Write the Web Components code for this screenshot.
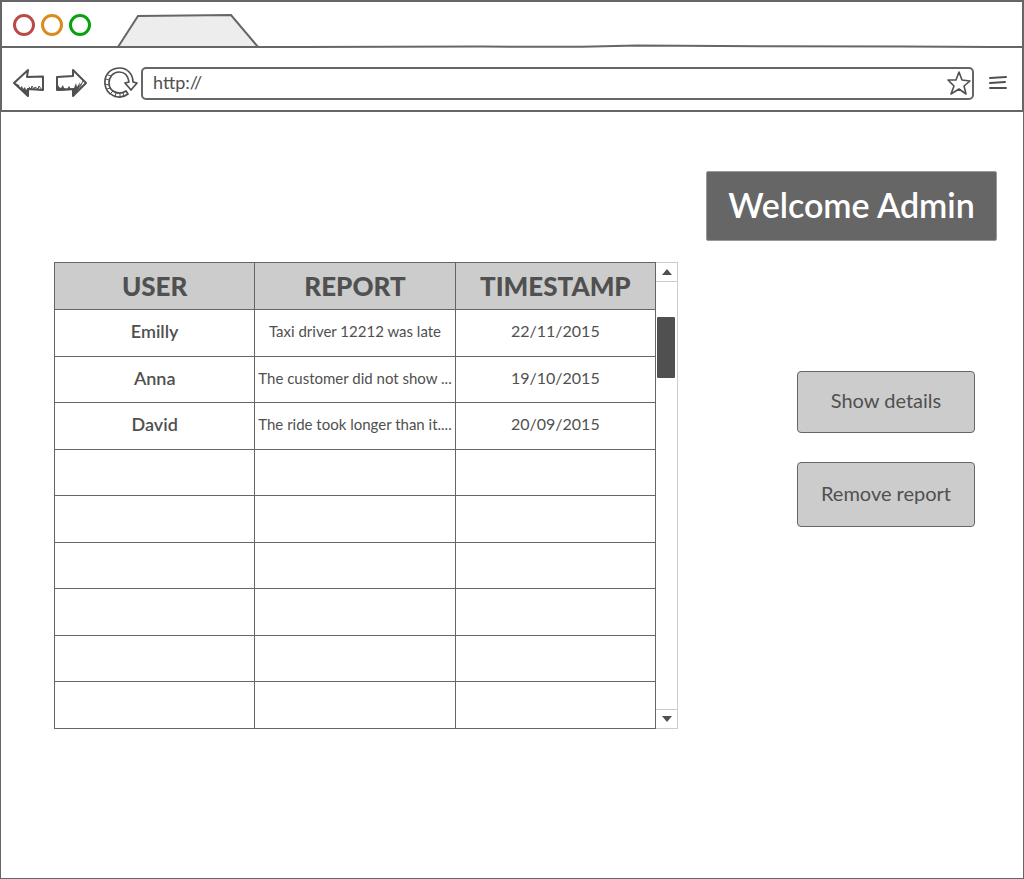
<!DOCTYPE html>
<html lang="en">
<head>
<meta charset="utf-8">
<title>Welcome Admin</title>
<style>
  html, body { margin: 0; height: 100%; }
  body { font-family: Lato, "Open Sans", sans-serif; color: #505050; background: #fff; }
</style>
</head>
<body>
<admin-page></admin-page>

<script>
const define = (name, html, setup) => {
  const template = document.createElement('template');
  template.innerHTML = html;
  customElements.define(name, class extends HTMLElement {
    constructor() {
      super();
      this.attachShadow({ mode: 'open' }).append(template.content.cloneNode(true));
    }
    connectedCallback() { if (setup) setup(this, this.shadowRoot); }
  });
};

define('tab-strip', `
  <style>
    :host { display: grid; height: 46px; position: relative; box-sizing: border-box; }
    .row { display: flex; align-items: center; gap: 6px; padding: 0 11px; }
    i { box-sizing: border-box; width: 22px; height: 22px; border: 3px solid; border-radius: 50%; }
    .r { color: #b94a48; } .o { color: #dc8a1e; } .g { color: #06a010; }
    .tab { display: block; width: 142px; height: 46px; margin-left: 20px; }
    .line { position: absolute; left: 0; bottom: 0; width: 100%; height: 4px; display: block; }
  </style>
  <div class="row"><i class="r"></i><i class="o"></i><i class="g"></i>
    <svg class="tab" viewBox="0 0 142 46"><path d="M1 45L21 14L114 13L141 45" fill="#ededed" stroke="#666" stroke-width="2"/></svg>
  </div>
  <svg class="line" viewBox="0 0 1020 4" preserveAspectRatio="none"><path d="M0 3H300L480 2.6L580 2.7L635 1.5L760 2.2L900 2.4L990 3H1020" fill="none" stroke="#666" stroke-width="2"/></svg>
`);

define('tool-bar', `
  <style>
    :host { display: flex; align-items: center; box-sizing: border-box; height: 62px; padding: 8px 14px 0 11px; }
    button { all: unset; display: block; }
    svg { display: block; fill: none; stroke: #505050; stroke-width: 2; stroke-linejoin: round; stroke-linecap: round; }
    .fwd { margin-left: 11px; }
    .load { margin-left: 16px; }
    .address { flex: 1; display: flex; align-items: center; box-sizing: border-box; height: 33px; margin: 0 14px 0 2px; padding: 0 1px 0 10px; border: 2px solid #666; border-radius: 5px; }
    input { flex: 1; min-width: 0; border: 0; padding: 0 0 2px; outline: 0; background: none; font: 18px/24px Lato, sans-serif; color: #505050; }
    .ink { fill: #505050; stroke: none; }
    .scratch { stroke-width: 1; }
  </style>
  <button aria-label="Back"><svg width="32" height="30" viewBox="0 0 32 30"><path d="M1 15L15 2L14 9L30 8.500V22L15 21L15 28Z"/><path class="ink" d="M2 15L6 17L7 20L9 18L10 21L12 19L13 22L15 20V29L12 26Z"/><path class="scratch" d="M16 19L18 21L19 18L21 21L22 19L25 21L26 18L29 22"/></svg></button>
  <button class="fwd" aria-label="Forward"><svg width="31" height="30" viewBox="0 0 31 30"><path d="M30 15L17 2L17 8L1 9V22L17 21V28Z"/><path class="ink" d="M1 15L3 19L5 20L7 17L8 20L11 21L13 18L15 21L18 20L20 15L21 19L24 14L23 20L18 28L17 22L1 23Z"/><path class="scratch" d="M24 19L27 13M22 21L25 16"/></svg></button>
  <button class="load" aria-label="Reload"><svg width="36" height="34" viewBox="0 0 36 34"><path stroke-width="1.700" d="M25 28C16 35 3 29 2 18C1 7 9 2 17 2C24 2 30 8 30 16L34 17L28 24L22 17L26 16C25 9 21 6 16 6C10 6 6 11 6 17C6 25 15 30 23 25Z"/><path class="scratch" d="M3 13L6 14M2 18L6 19M4 23L7 22M7 28L10 25M12 31L13 27M17 31V28M21 30L20 27M5 9L8 10"/></svg></button>
  <label class="address"><input type="text" value="http://" aria-label="Address">
    <svg width="24" height="26" viewBox="0 0 24 26"><path stroke-width="1.600" d="M12 2L15 10L23 11L17 16L19 24L12 19L4 24L7 16L1 10L9 10Z"/></svg>
  </label>
  <button aria-label="Menu"><svg width="20" height="20" viewBox="0 0 20 20"><path d="M2 5L18 4M2 10L17 9M2 15H18"/></svg></button>
`);

define('report-table', `
  <style>
    :host { display: block; width: 602px; }
    table { width: 100%; height: 467px; table-layout: fixed; border-collapse: collapse; }
    th, td { box-sizing: border-box; border: 1px solid #666; text-align: center; white-space: nowrap; overflow: hidden; }
    thead tr { height: 47px; }
    tbody tr { height: 46px; }
    th { padding: 0 2px; background: #ccc; font: 900 26px/32px Lato, sans-serif; }
    td { padding: 0 2px 3px; font-size: 15px; line-height: 20px; }
    td:first-child { font-size: 18px; font-weight: 600; }
    td:last-child { font-size: 16px; }
  </style>
  <table><thead><tr><th>USER</th><th>REPORT</th><th>TIMESTAMP</th></tr></thead><tbody></tbody></table>
`, (host, root) => {
  const rows = [
    ['Emilly', 'Taxi driver 12212 was late', '22/11/2015'],
    ['Anna', 'The customer did not show ...', '19/10/2015'],
    ['David', 'The ride took longer than it....', '20/09/2015'],
  ];
  while (rows.length < 9) rows.push(['', '', '']);
  const body = root.querySelector('tbody');
  for (const row of rows) {
    const tr = body.insertRow();
    for (const text of row) tr.insertCell().textContent = text;
  }
});

define('scroll-track', `
  <style>
    :host { display: flex; flex-direction: column; box-sizing: border-box; width: 22px; border: 1px solid #ccc; border-left: 0; }
    button { all: unset; display: grid; place-items: center; height: 18px; }
    .up { border-bottom: 1px solid #ccc; } .down { border-top: 1px solid #ccc; }
    .track { flex: 1; padding: 35px 2px 0 1px; }
    .thumb { height: 61px; background: #505050; border-radius: 1px; }
    svg { display: block; fill: #505050; }
  </style>
  <button class="up" aria-label="Scroll up"><svg width="10" height="6"><path d="M5 0L10 6H0Z"/></svg></button>
  <div class="track"><div class="thumb"></div></div>
  <button class="down" aria-label="Scroll down"><svg width="10" height="6"><path d="M0 0H10L5 6Z"/></svg></button>
`);

define('action-button', `
  <style>
    :host { display: block; }
    button { display: block; box-sizing: border-box; width: 100%; min-height: 62px; border: 1px solid #666; border-radius: 4px; background: #ccc; color: #505050; font: 20px/24px Lato, sans-serif; padding: 0 0 4px; }
    :host([tall]) button { min-height: 65px; }
  </style>
  <button><slot></slot></button>
`);

define('page-banner', `
  <style>
    :host { display: block; }
    h1 { margin: 0; box-sizing: border-box; padding: 12px 0 14px; background: #666; border: 1px solid #999; border-radius: 2px; color: #fff; text-align: center; font: 600 34px/42px Lato, sans-serif; }
  </style>
  <h1><slot></slot></h1>
`);

define('admin-page', `
  <style>
    :host { display: flex; flex-direction: column; min-height: 100vh; box-sizing: border-box; }
    header { border: 2px solid #666; border-bottom-width: 2px; }
    main { flex: 1; display: flex; justify-content: space-between; border: 1px solid #666; border-top: 0; padding: 59px 26px 40px 53px; }
    .list { display: flex; padding-top: 91px; align-self: flex-start; }
    aside { width: 291px; }
    .actions { display: grid; gap: 29px; padding: 130px 22px 0 91px; }
  </style>
  <header><tab-strip></tab-strip><tool-bar></tool-bar></header>
  <main>
    <section class="list"><report-table></report-table><scroll-track></scroll-track></section>
    <aside>
      <page-banner>Welcome Admin</page-banner>
      <div class="actions"><action-button>Show details</action-button><action-button tall>Remove report</action-button></div>
    </aside>
  </main>
`);
</script>
</body>
</html>
